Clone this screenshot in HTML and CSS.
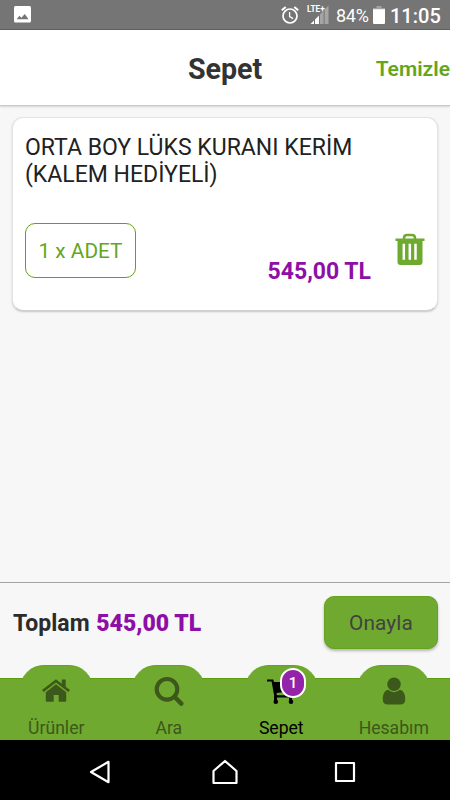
FILE: index.html
```html
<!DOCTYPE html>
<html lang="tr">
<head>
<meta charset="utf-8">
<title>Sepet</title>
<link rel="stylesheet" href="styles.css">
</head>
<body>
<div class="status">
  <svg class="photo" width="17" height="17" viewBox="0 0 17 17"><rect width="17" height="16.5" rx="1.5" fill="#fff"/><path d="M2.7 13.3 5.4 9.7l2 2.1L10.8 8l3.7 5.3z" fill="#757575"/></svg>
  <svg class="alarm" width="18" height="18" viewBox="0 0 18 18" fill="none" stroke="#fff"><circle cx="9" cy="10" r="7" stroke-width="1.7"/><path d="M.8 4.2 4.7 1M17.2 4.2 13.3 1" stroke-width="2"/><path d="M8.6 6v4.6l3.5 2" stroke-width="1.3"/></svg>
  <div class="signal"><span class="lte">LTE+</span><svg width="23" height="20" viewBox="0 0 23 20"><path d="M4.5 19 8 15.5V19zM9 14.5l4-4V19H9z" fill="#fff"/><path d="M14 9.5l3.6-3.8V19H14zM18.6 4.6 22.5.5V19h-3.9z" fill="#a5a5a5"/></svg></div>
  <span class="pct">84%</span>
  <svg class="battery" width="12" height="18" viewBox="0 0 12 18"><path d="M3.5 0h5v2H12v3H0V2h3.5z" fill="#a2a2a2"/><path d="M0 3.2h12V17q0 1-1 1H1q-1 0-1-1z" fill="#fff"/></svg>
  <span class="clock">11:05</span>
</div>
<header class="header"><span></span><h1>Sepet</h1><span class="clear">Temizle</span></header>
<main class="content">
  <article class="card">
    <div class="name">ORTA BOY LÜKS KURANI KERİM<br>(KALEM HEDİYELİ)</div>
    <div class="row">
      <div class="qty">1 x ADET</div>
      <div class="price">545,00 TL</div>
      <svg class="trash" width="30" height="33" viewBox="0 0 30 33"><path d="M9 6V5q0-3 3-3h5q3 0 3 3v1" fill="none" stroke="#6eaa2e" stroke-width="2.5"/><path d="M.5 5.5h29V8h-2v21q0 3-3 3h-19q-3 0-3-3V8h-2z" fill="#6eaa2e"/><path d="M8.8 10.7v16M14.8 10.7v16M20.5 10.7v16" stroke="#fff" stroke-width="2.5"/></svg>
    </div>
  </article>
</main>
<section class="total"><div class="sum">Toplam <b>545,00 TL</b></div><div class="confirm">Onayla</div></section>
<nav class="tabs">
  <div class="tab"><svg width="30" height="30" viewBox="0 0 30 30" fill="#3c581a"><path d="M15 3.3 1 14l1.7 2.1L15 6.6l12.3 9.5L29 14l-4.3-3.3V3.6h-3.9v4.1z"/><path d="M4.8 16.2 15 8.3l10.2 7.9v8.5q0 1-1 1h-6.5V19h-5v6.7H5.8q-1 0-1-1z"/></svg><span>Ürünler</span></div>
  <div class="tab"><svg width="30" height="30" viewBox="0 0 30 30" fill="none" stroke="#3c581a"><circle cx="13" cy="13.3" r="10.3" stroke-width="4.1"/><path d="m20.5 20.8 6.8 6.8" stroke-width="4.4" stroke-linecap="round"/></svg><span>Ara</span></div>
  <div class="tab active"><svg width="30" height="30" viewBox="0 0 30 30"><path d="M1 3.6h6.3l.6 2.3H27v9L10.5 17l.5 2.2h16v2.2H8.5L5.6 5.5H1z"/><path d="M8 20h3v4H8zM23 20h3v4h-3z"/><circle cx="9.8" cy="25.8" r="2.3"/><circle cx="25" cy="25.8" r="2.3"/></svg><i class="badge">1</i><span>Sepet</span></div>
  <div class="tab"><svg width="30" height="30" viewBox="0 0 30 30" fill="#3c581a"><circle cx="15" cy="8.2" r="6.7"/><path d="M9 13.8q6 4.8 12 0 5.2 1.4 5.2 9.4 0 5.3-5 5.3H8.8q-5 0-5-5.3 0-8 5.2-9.4z"/></svg><span>Hesabım</span></div>
</nav>
<footer class="softkeys">
  <svg width="24" height="26" viewBox="0 0 24 26"><path d="M20.5 2.8v20.4L3 13z"/></svg>
  <svg class="home" width="28" height="26" viewBox="0 0 28 26"><path d="M14 2 2.5 12v12h23V12z"/></svg>
  <svg width="22" height="22" viewBox="0 0 22 22"><path d="M2 2h18v18H2z"/></svg>
</footer>
</body>
</html>
```
FILE: styles.css
```css
* { box-sizing: border-box; }
body { margin: 0; width: 450px; height: 800px; overflow: hidden; display: flex; flex-direction: column; background: #f7f7f7; font-family: Roboto, sans-serif; color: #212121; }
svg { display: block; flex: none; }
.status { height: 30px; flex: none; display: flex; align-items: center; background: #757575; border-bottom: 1px solid #625f62; color: #fff; padding: 0 10px 0 14px; }
.photo { margin-right: auto; }
.alarm { margin-right: 7px; }
.signal { position: relative; width: 23px; height: 20px; margin-right: 7px; }
.lte { position: absolute; left: 1px; top: 0; font-size: 8.2px; line-height: 9px; font-weight: 700; }
.pct { width: 32px; font-size: 18px; letter-spacing: -.3px; margin-right: 5px; padding-top: 2px; }
.battery { margin-right: 5px; }
.clock { width: 50px; font-size: 20px; font-weight: 500; padding-top: 2px; white-space: nowrap; }
.header { height: 76px; flex: none; display: grid; grid-template-columns: 1fr auto 1fr; align-items: center; background: #fff; border-bottom: 1px solid #c8c8c8; box-shadow: 0 1px 2px #0002; }
h1 { margin: 2px 0 0; font-size: 28.6px; line-height: 34px; font-weight: 700; color: #333; }
.clear { justify-self: end; font-size: 21px; font-weight: 600; color: #64a51c; padding-top: 2px; }
.content { flex: 1; padding: 11px 12px; }
.card { height: 194px; padding: 16px 12px 0 13px; border-radius: 11px; background: #fff; border: 1px solid #e5e5e5; border-bottom-color: #d0d0d0; box-shadow: 0 1px 2px #0003; }
.name { font-size: 23px; line-height: 27px; white-space: nowrap; margin-left: -1px; }
.row { display: flex; align-items: flex-start; margin-top: 35px; margin-left: -1px; }
.qty { width: 111px; height: 55px; display: flex; align-items: center; justify-content: center; border: 1px solid #5fa21a; border-radius: 10px; font-size: 20.8px; color: #64a51c; padding-top: 1px; }
.price { margin: 35px 24px 0 auto; font-size: 23px; line-height: 28px; font-weight: 700; color: #8e0fa5; }
.trash { margin-top: 10px; }
.total { height: 96px; flex: none; display: flex; justify-content: space-between; padding: 13px 12px 0; border-top: 1px solid #a5a5a5; }
.sum { font-size: 23px; line-height: 28px; font-weight: 700; padding-top: 14px; padding-left: 1px; color: #2b2b2b; word-spacing: 1px; }
.sum b { color: #8e0fa5; word-spacing: 0; }
.confirm { width: 114px; height: 53px; display: flex; align-items: center; justify-content: center; border-radius: 10px; background: #6fa92f; border: 1px solid #63a41b; color: #424242; font-size: 20.8px; letter-spacing: .1px; padding-top: 1px; box-shadow: 0 2px 3px #0004; }
.tabs { height: 62px; flex: none; display: grid; grid-template-columns: repeat(4, 1fr); background: #6fa92f; border-top: 1px solid #5ca00f; }
.tab { position: relative; display: flex; flex-direction: column; align-items: center; color: #3c581a; font-size: 17.6px; }
.tab::before { content: ""; position: absolute; top: -14px; width: 73px; height: 28px; border-radius: 24px 24px 0 0; background: #6fa92f; border-top: 1px solid #63a41b; clip-path: inset(0 0 13px 0); }
.tab svg { position: relative; margin-top: -3px; }
.tab span { position: relative; line-height: 22px; margin-top: 11px; }
.active { color: #000; }
.badge { position: absolute; left: 55px; top: -11px; width: 26px; height: 30px; border: 2px solid #fff; border-radius: 13px; background: #9324a9; color: #fff; font: 500 15px/27px Roboto, sans-serif; text-align: center; }
.softkeys { height: 60px; flex: none; display: flex; align-items: center; justify-content: space-between; padding: 4px 94px 0 88px; background: #000; }
.home { margin-left: 4px; }
.softkeys path { fill: none; stroke: #fff; stroke-width: 2.2; stroke-linejoin: round; }
```
